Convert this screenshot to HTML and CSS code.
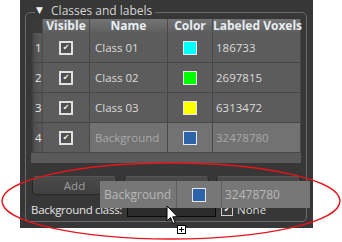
FILE: index.html
```html
<!DOCTYPE html>
<html lang="en">
<head>
    <meta charset="UTF-8">
    <title>Classes and labels</title>
    <link rel="stylesheet" href="styles.css">
</head>
<body>
    <div class="panel">
        <div class="group">
            <span class="group-title"><span class="arrow">▼</span> Classes and labels</span>

            <div class="table">
                <div class="hcell corner"></div>
                <div class="hcell">Visible</div>
                <div class="hcell">Name</div>
                <div class="hcell">Color</div>
                <div class="hcell">Labeled Voxels</div>

                <div class="rnum">1</div>
                <div class="cell center"><span class="check">✔</span></div>
                <div class="cell name">Class 01</div>
                <div class="cell center"><span class="swatch cyan"></span></div>
                <div class="cell count">186733</div>

                <div class="rnum">2</div>
                <div class="cell center"><span class="check">✔</span></div>
                <div class="cell name">Class 02</div>
                <div class="cell center"><span class="swatch green"></span></div>
                <div class="cell count">2697815</div>

                <div class="rnum">3</div>
                <div class="cell center"><span class="check">✔</span></div>
                <div class="cell name">Class 03</div>
                <div class="cell center"><span class="swatch yellow"></span></div>
                <div class="cell count">6313472</div>

                <div class="rnum">4</div>
                <div class="cell center"><span class="check">✔</span></div>
                <div class="cell name sel">Background</div>
                <div class="cell center sel"><span class="swatch blue"></span></div>
                <div class="cell count sel">32478780</div>
            </div>

            <div class="buttons">
                <div class="btn">Add</div>
                <div class="btn"></div>
                <div class="btn"></div>
            </div>

            <div class="bg-row">
                <span class="bg-label">Background class:</span>
                <span class="combo"></span>
                <span class="small-check">✔</span>
                <span class="none">None</span>
            </div>
        </div>
    </div>

    <!-- row being dragged -->
    <div class="drag-row">
        <div class="dcell dname">Background</div>
        <div class="dcell dcolor"><span class="swatch blue"></span></div>
        <div class="dcell dcount">32478780</div>
    </div>

    <svg class="cursor" width="14" height="22" viewBox="0 0 14 22">
        <path d="M1 1 L1 16 L4.5 12.5 L7 18.5 L9.2 17.6 L6.8 11.8 L11.5 11.8 Z" fill="#fff" stroke="#000" stroke-width="1"/>
    </svg>
    <svg class="drop" width="9" height="9" viewBox="0 0 9 9">
        <rect x="0.5" y="0.5" width="8" height="8" fill="#fff" stroke="#000"/>
        <path d="M4.5 2 V7 M2 4.5 H7" stroke="#000"/>
    </svg>

    <svg class="ellipse" width="342" height="242">
        <ellipse cx="171" cy="201" rx="169" ry="38" fill="none" stroke="#e8141a" stroke-width="1.4"/>
    </svg>
</body>
</html>
```

FILE: styles.css
```css
* {
    margin: 0;
    padding: 0;
    box-sizing: border-box;
}

body {
    font-family: 'Open Sans', 'DejaVu Sans', sans-serif;
    font-size: 11.5px;
    background: #fff;
    width: 342px;
    height: 242px;
    overflow: hidden;
    position: relative;
}

.panel {
    width: 293px;
    height: 228px;
    margin-left: 20px;
    background: #373737;
    padding: 12px 6px 0 5px;
}

.group {
    position: relative;
    height: 210px;
    border: 1px solid #6a6a6a;
    border-radius: 5px;
    padding: 6px 5px 0 5px;
}

.group-title {
    position: absolute;
    top: -9px;
    left: 9px;
    padding: 0 3px 0 1px;
    background: #373737;
    color: #d6d6d6;
    font-size: 12px;
    line-height: 14px;
}

.arrow {
    font-size: 9px;
    color: #f0f0f0;
    margin-right: 5px;
    position: relative;
    top: -2px;
}

.table {
    display: grid;
    grid-template-columns: 12px 47px 78px 45px 88px;
    grid-template-rows: 14px repeat(4, 30px);
    width: 270px;
    height: 144px;
    background: #5a5a5a;
    align-content: start;
}

.hcell {
    background: linear-gradient(#747474, #5e5e5e);
    color: #e8eef4;
    font-weight: bold;
    font-size: 12px;
    text-align: center;
    line-height: 14px;
    border-right: 1px solid #4c4c4c;
    white-space: nowrap;
}

.hcell.corner {
    background: #3a3a3a;
}

.rnum {
    background: linear-gradient(to right, #353535, #505050 30%, #5a5a5a 80%, #4a4a4a);
    color: #e6e6e6;
    line-height: 30px;
    padding-left: 4px;
    border-bottom: 1px solid #444;
}

.cell {
    background: #5c5c5c;
    color: #dadada;
    line-height: 29px;
    border-right: 1px solid #474747;
    border-bottom: 1px solid #474747;
    white-space: nowrap;
}

.cell.center {
    display: flex;
    justify-content: center;
    align-items: center;
}

.cell.name {
    padding-left: 5px;
}

.cell.count {
    padding-left: 3px;
}

.cell.sel {
    background: #727272;
    color: #a8a8a8;
}

.check {
    width: 14px;
    height: 14px;
    border: 2px solid #e0e0e0;
    background: #505050;
    color: #f2f2f2;
    font-size: 8px;
    line-height: 10px;
    text-align: center;
    font-family: 'DejaVu Sans', sans-serif;
}

.swatch {
    display: inline-block;
    width: 14px;
    height: 14px;
    border: 1px solid #e8e8e8;
}

.swatch.cyan { background: #00ffff; }
.swatch.green { background: #00ff00; }
.swatch.yellow { background: #ffff00; }
.swatch.blue { background: #2d63a8; }

.buttons {
    display: flex;
    gap: 7px;
    margin: 13px 0 0 1px;
}

.btn {
    width: 85px;
    height: 19px;
    border: 1px solid #262626;
    border-top-color: #555;
    border-radius: 4px;
    background: linear-gradient(#4a4a4a, #404040);
    color: #9c9c9c;
    text-align: center;
    line-height: 17px;
}

.bg-row {
    display: flex;
    align-items: center;
    margin-top: 5px;
    height: 19px;
}

.bg-label {
    color: #e2e2e2;
    letter-spacing: -0.3px;
    margin-right: 5px;
    white-space: nowrap;
}

.combo {
    width: 89px;
    height: 16px;
    border: 1px solid #0a0a0a;
    background: #2c2c2c;
    margin-top: -2px;
}

.small-check {
    width: 12px;
    height: 12px;
    margin-left: 5px;
    border: 1px solid #cfcfcf;
    background: #3a3a3a;
    color: #eee;
    font-size: 8px;
    line-height: 10px;
    text-align: center;
    font-family: 'DejaVu Sans', sans-serif;
}

.none {
    color: #dcdcdc;
    margin-left: 4px;
}

.drag-row {
    position: absolute;
    left: 100px;
    top: 181px;
    width: 210px;
    height: 27px;
    display: flex;
    background: #777;
}

.dcell {
    color: #b8b8b8;
    font-size: 12px;
    line-height: 27px;
    white-space: nowrap;
    border-right: 1px solid #5e5e5e;
}

.dname {
    width: 77px;
    padding-left: 4px;
}

.dcolor {
    width: 45px;
    display: flex;
    justify-content: center;
    align-items: center;
}

.dcount {
    flex: 1;
    padding-left: 3px;
    border-right: none;
}

.cursor {
    position: absolute;
    left: 166px;
    top: 205px;
}

.drop {
    position: absolute;
    left: 177px;
    top: 225px;
}

.ellipse {
    position: absolute;
    left: 0;
    top: 0;
}
```
